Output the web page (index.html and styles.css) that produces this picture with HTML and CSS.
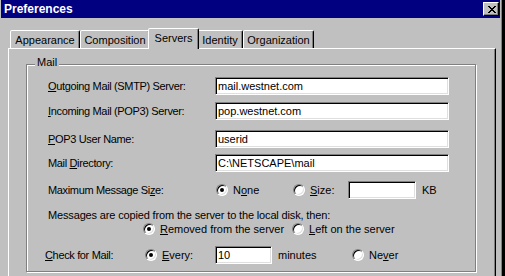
FILE: index.html
```html
<!DOCTYPE html>
<html>
<head>
<meta charset="utf-8">
<title>Preferences</title>
<link rel="stylesheet" href="styles.css">
</head>
<body>
<div class="window">
  <div class="inner">
    <div class="titlebar">
      <span class="title">Preferences</span>
      <span class="close">
        <svg width="8" height="7" viewBox="0 0 8 7" shape-rendering="crispEdges"><path d="M0 0h2v1h-2z M6 0h2v1h-2z M1 1h2v1h-2z M5 1h2v1h-2z M2 2h4v1h-4z M3 3h2v1h-2z M2 4h4v1h-4z M1 5h2v1h-2z M5 5h2v1h-2z M0 6h2v1h-2z M6 6h2v1h-2z" fill="#000"/></svg>
      </span>
    </div>
    <div class="tabs">
      <div class="tab t-app">Appearance</div>
      <div class="tab t-comp">Composition</div>
      <div class="tab t-srv active">Servers</div>
      <div class="tab t-id">Identity</div>
      <div class="tab t-org">Organization</div>
    </div>
    <div class="panel">
      <div class="group">
        <span class="legend">Mail</span>
        <div class="row r1">
          <span class="label"><u>O</u>utgoing Mail (SMTP) Server:</span>
          <div class="field wide">mail.westnet.com</div>
        </div>
        <div class="row r2">
          <span class="label"><u>I</u>ncoming Mail (POP3) Server:</span>
          <div class="field wide">pop.westnet.com</div>
        </div>
        <div class="row r3">
          <span class="label"><u>P</u>OP3 User Name:</span>
          <div class="field wide">userid</div>
        </div>
        <div class="row r4">
          <span class="label">Mail <u>D</u>irectory:</span>
          <div class="field wide">C:\NETSCAPE\mail</div>
        </div>
        <div class="row r5">
          <span class="label">Maximum Message Si<u>z</u>e:</span>
          <span class="opt o-none"><span class="radio on"></span><span>N<u>o</u>ne</span></span>
          <span class="opt o-size"><span class="radio"></span><span><u>S</u>ize:</span></span>
          <div class="field f-size"></div>
          <span class="kb">KB</span>
        </div>
        <div class="row r6">Messages are copied from the server to the local disk, then:</div>
        <div class="row r7">
          <span class="opt o-removed"><span class="radio on"></span><span><u>R</u>emoved from the server</span></span>
          <span class="opt"><span class="radio"></span><span><u>L</u>eft on the server</span></span>
        </div>
        <div class="row r8">
          <span class="label l-check"><u>C</u>heck for Mail:</span>
          <span class="opt o-every"><span class="radio on"></span><span><u>E</u>very:</span></span>
          <div class="field f-min">10</div>
          <span class="minutes">minutes</span>
          <span class="opt"><span class="radio"></span><span>Ne<u>v</u>er</span></span>
        </div>
      </div>
    </div>
  </div>
</div>
</body>
</html>
```

FILE: styles.css
```css
* { box-sizing: border-box; }

html, body {
  margin: 0;
  padding: 0;
}

body {
  width: 505px;
  height: 276px;
  overflow: hidden;
  background: #c0c0c0;
  font-family: "Liberation Sans", Arial, sans-serif;
  font-size: 11px;
  color: #000;
}

.window {
  width: 505px;
  height: 276px;
  border-right: 3px solid #000;
}

.inner {
  height: 100%;
  border-right: 1px solid #808080;
  padding: 0 1px;
  display: flex;
  flex-direction: column;
}

.titlebar {
  flex: none;
  height: 18px;
  background: #000080;
  color: #fff;
  display: flex;
  align-items: center;
  justify-content: space-between;
  padding: 0 1px 0 3px;
}

.title {
  font-weight: bold;
  font-size: 12px;
}

.close {
  width: 16px;
  height: 14px;
  background: #c0c0c0;
  border: 1px solid;
  border-color: #fff #000 #000 #fff;
  box-shadow: inset -1px -1px #808080;
  display: flex;
  align-items: center;
  padding-left: 4px;
}

.close svg { display: block; }

.tabs {
  flex: none;
  display: flex;
  align-items: flex-end;
  height: 20px;
  margin: 10px 0 0 9px;
}

.tab {
  height: 18px;
  border: 1px solid;
  border-bottom: none;
  border-color: #fff #000 transparent #fff;
  border-radius: 2px 2px 0 0;
  box-shadow: inset -1px 0 #808080;
  background: #c0c0c0;
  text-align: center;
  padding-top: 2px;
  line-height: 14px;
  white-space: nowrap;
}

.t-app { width: 70px; }
.t-comp { width: 70px; }
.t-srv { width: 47px; }
.t-id { width: 46px; }
.t-org { width: 71px; }

.tab.active {
  width: 51px;
  height: 21px;
  margin: 0 -2px -1px;
  position: relative;
  z-index: 1;
}

.panel {
  flex: 1;
  margin: 0 4px 0 7px;
  border-top: 1px solid #fff;
  border-left: 1px solid #fff;
  border-right: 1px solid #000;
  box-shadow: inset -1px 0 #808080;
  padding: 15px 17px 0 17px;
}

.group {
  position: relative;
  width: 450px;
  height: 208px;
  border: 1px solid #808080;
  box-shadow: inset 1px 1px #fff, 1px 1px #fff;
  padding: 12px 0 0 21px;
}

.legend {
  position: absolute;
  left: 8px;
  top: -9px;
  padding: 0 2px;
  line-height: 13px;
  background: #c0c0c0;
}

.row {
  display: flex;
  align-items: center;
  height: 18px;
  white-space: nowrap;
}

.r2 { margin-top: 7px; }
.r3 { margin-top: 10px; }
.r4 { margin-top: 6px; }
.r5 { margin-top: 9px; }
.r6 { margin-top: 9px; height: 13px; letter-spacing: -0.15px; }
.r7 { margin-top: 1px; height: 14px; }
.r8 { margin-top: 10px; }

.label {
  flex: none;
  width: 167px;
  letter-spacing: -0.35px;
}

.l-check {
  width: 100px;
  margin-left: -3px;
}

.field {
  flex: none;
  height: 18px;
  background: #fff;
  border: 1px solid;
  border-color: #808080 #fff #fff #808080;
  box-shadow: inset 1px 1px #000, inset -1px -1px #dfdfdf;
  padding: 0 1px 0 2px;
  line-height: 16px;
  white-space: nowrap;
  overflow: hidden;
}

.wide { width: 234px; }
.f-size { width: 68px; }
.f-min { width: 57px; }

.opt {
  flex: none;
  display: flex;
  align-items: center;
  gap: 5px;
}

.o-none { width: 77px; margin-left: 1px; }
.o-size { width: 55px; }
.kb { margin-left: 6px; }

.o-removed { width: 149px; margin-left: 95px; }

.o-every { width: 70px; }
.minutes { width: 74px; margin-left: 6px; }

.radio {
  flex: none;
  position: relative;
  width: 12px;
  height: 12px;
  border-radius: 50%;
  background: #fff;
  border: 1px solid;
  border-color: #808080 #fff #fff #808080;
  box-shadow: inset 1px 1px #000, inset -1px -1px #dfdfdf;
}

.radio.on::after {
  content: "";
  position: absolute;
  left: 3px;
  top: 3px;
  width: 4px;
  height: 4px;
  border-radius: 50%;
  background: #000;
}
```
